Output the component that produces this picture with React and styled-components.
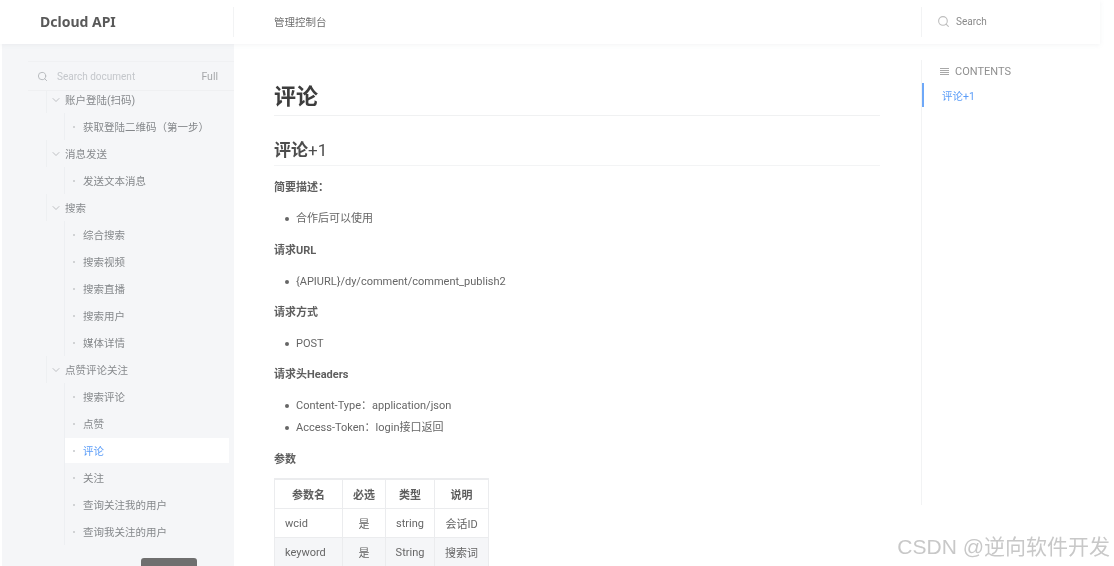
import React from "react";
import styled, { createGlobalStyle } from "styled-components";
import { Search, ChevronDown } from "lucide-react";

const Global = createGlobalStyle`
  html, body { margin: 0; padding: 0; background: #fff; }
  body { font-family: Roboto, "Noto Sans CJK SC", sans-serif; color: #5c5c5c; }
`;

const Page = styled.div`
  position: relative;
  width: 1114px;
  height: 566px;
  overflow: hidden;
  background: #fff;
  display: flex;
  flex-direction: column;
  filter: blur(0.4px);
`;

const Header = styled.header`
  width: 1100px;
  height: 44px;
  flex: none;
  display: flex;
  align-items: center;
  background: #fff;
  box-shadow: 0 1px 5px rgba(120, 130, 140, 0.09);
  position: relative;
  z-index: 2;
`;

const Brand = styled.div`
  width: 234px;
  height: 30px;
  flex: none;
  box-sizing: border-box;
  padding-left: 40px;
  border-right: 1px solid #f2f3f4;
  font-family: "Noto Sans", sans-serif;
  font-size: 14px;
  font-weight: 700;
  line-height: 29px;
  color: #595959;
`;

const HeaderLink = styled.div`
  margin-left: 40px;
  width: 647px;
  padding-bottom: 2px;
  font-size: 10.5px;
  color: #6e6e6e;
`;

const HeaderSearch = styled.div`
  height: 30px;
  flex: 1;
  display: flex;
  align-items: center;
  gap: 6px;
  padding-left: 15px;
  padding-bottom: 1px;
  box-sizing: border-box;
  border-left: 1px solid #f2f3f4;
  font-size: 10px;
  color: #8a8a8a;
  svg { color: #bdbdbd; }
`;

const Body = styled.div`
  flex: 1;
  min-height: 0;
  display: flex;
`;

const Sidebar = styled.aside`
  width: 232px;
  flex: none;
  margin-left: 2px;
  background: #f5f6f8;
  position: relative;
  display: flex;
  flex-direction: column;
  overflow: hidden;
`;

const DocSearch = styled.div`
  height: 28px;
  flex: none;
  margin: 17px 0 0 26px;
  padding: 0 16px 0 9px;
  display: flex;
  align-items: center;
  border-top: 1px solid #f0f1f3;
  border-bottom: 1px solid #eff0f2;
  font-size: 10px;
  color: #c4c7cb;
  svg { color: #b4b7ba; margin-right: 9px; }
`;

const Full = styled.span`
  margin-left: auto;
  font-size: 10.5px;
  color: #a6a8aa;
`;

const TreeClip = styled.div`
  flex: 1;
  min-height: 0;
  overflow: hidden;
`;

const Tree = styled.div`
  margin-top: -5px;
  padding-left: 44px;
  display: flex;
  flex-direction: column;
`;

const GroupRow = styled.div`
  height: 27px;
  display: flex;
  align-items: center;
  gap: 3px;
  padding-left: 3px;
  border-left: 1px solid #eef0f2;
  font-size: 10.5px;
  color: #878a8d;
  svg { color: #a5a8ab; flex: none; }
`;

const LeafList = styled.div`
  margin-left: 18px;
  border-left: 1px solid #edeff2;
  margin-right: 5px;
`;

const Leaf = styled.div`
  height: ${(p) => (p.$active ? "25px" : "27px")};
  margin: ${(p) => (p.$active ? "1px 0" : "0")};
  display: flex;
  align-items: center;
  font-size: 10.5px;
  padding-left: 8px;
  background: ${(p) => (p.$active ? "#fff" : "transparent")};
  color: ${(p) => (p.$active ? "#5a9cf8" : "#85888b")};
  &::before {
    content: "";
    width: 2px;
    height: 2px;
    border-radius: 50%;
    background: #c4c7ca;
    margin-right: 8px;
  }
`;

const ScrollTop = styled.div`
  position: absolute;
  left: 139px;
  bottom: -10px;
  width: 56px;
  height: 18px;
  border-radius: 3px;
  background: #6f6f6f;
`;

const Main = styled.main`
  width: 606px;
  flex: none;
  margin-left: 40px;
  min-width: 0;
  overflow: hidden;
`;

const H1 = styled.h1`
  margin: 34px 0 0;
  height: 38px;
  box-sizing: border-box;
  border-bottom: 1px solid #f0f1f2;
  font-size: 22px;
  line-height: 37px;
  font-weight: 700;
  color: #3d3d3d;
`;

const H2 = styled.h2`
  margin: 19px 0 0;
  height: 31px;
  box-sizing: border-box;
  border-bottom: 1px solid #f3f4f5;
  font-size: 17px;
  line-height: 30px;
  font-weight: 700;
  color: #4d4d4d;
  span { font-weight: 400; }
`;

const Label = styled.p`
  margin: ${(p) => p.$top || 9}px 0 0;
  height: 22px;
  line-height: 22px;
  font-size: 11px;
  font-weight: 700;
  color: #5e5e5e;
`;

const Bullets = styled.ul`
  list-style: none;
  margin: 9px 0 0;
  padding: 0 0 0 22px;
  li {
    position: relative;
    height: 22px;
    line-height: 22px;
    font-size: 11px;
    color: #666;
  }
  li::before {
    content: "";
    position: absolute;
    left: -11px;
    top: 9px;
    width: 4px;
    height: 4px;
    border-radius: 50%;
    background: #666;
  }
`;

const Table = styled.table`
  margin-top: 7px;
  width: 214px;
  table-layout: fixed;
  border-collapse: collapse;
  font-size: 11px;
  color: #666;
  th, td {
    border: 1px solid #ebecee;
    text-align: center;
    padding: 0;
  }
  th { height: 28px; font-weight: 700; color: #5e5e5e; border-top-width: 2px; }
  td { height: 28px; }
  td:first-child { text-align: left; padding-left: 10px; }
  tbody tr:nth-child(2) td { background: #f5f6f8; }
`;

const Toc = styled.aside`
  margin: 16px 0 61px 41px;
  flex: 1;
  border-left: 1px solid #f2f3f4;
`;

const TocTitle = styled.div`
  margin: 2px 0 0 18px;
  height: 18px;
  display: flex;
  align-items: center;
  gap: 6px;
  font-size: 11px;
  color: #8f8f8f;
`;

const TocIcon = styled.svg`
  width: 9px;
  height: 7px;
  flex: none;
`;

const TocLink = styled.div`
  margin-top: 3px;
  height: 24px;
  line-height: 27px;
  padding-left: 18px;
  border-left: 2px solid #6ea8f8;
  font-size: 10.5px;
  color: #5a9cf8;
`;

const Watermark = styled.div`
  position: absolute;
  right: 4px;
  bottom: 5px;
  font-family: "Liberation Sans", "Noto Sans CJK SC", sans-serif;
  font-size: 21px;
  line-height: 28px;
  color: #c8c8c8;
  text-shadow: 1px 1px 1px rgba(255, 255, 255, 0.9);
  white-space: nowrap;
`;

const nav = [
  { title: "账户登陆(扫码)", items: ["获取登陆二维码（第一步）"] },
  { title: "消息发送", items: ["发送文本消息"] },
  { title: "搜索", items: ["综合搜索", "搜索视频", "搜索直播", "搜索用户", "媒体详情"] },
  { title: "点赞评论关注", items: ["搜索评论", "点赞", "评论", "关注", "查询关注我的用户", "查询我关注的用户"] },
];

const params = [
  ["wcid", "是", "string", "会话ID"],
  ["keyword", "是", "String", "搜索词"],
];

export default function App() {
  return (
    <Page>
      <Global />
      <Header>
        <Brand>Dcloud API</Brand>
        <HeaderLink>管理控制台</HeaderLink>
        <HeaderSearch>
          <Search size={13} strokeWidth={2} />
          Search
        </HeaderSearch>
      </Header>
      <Body>
        <Sidebar>
          <DocSearch>
            <Search size={11} strokeWidth={2} />
            Search document
            <Full>Full</Full>
          </DocSearch>
          <TreeClip>
            <Tree>
              {nav.map((group) => (
                <div key={group.title}>
                  <GroupRow>
                    <ChevronDown size={12} strokeWidth={1.4} />
                    {group.title}
                  </GroupRow>
                  <LeafList>
                    {group.items.map((item) => (
                      <Leaf key={item} $active={item === "评论"}>{item}</Leaf>
                    ))}
                  </LeafList>
                </div>
              ))}
            </Tree>
          </TreeClip>
          <ScrollTop />
        </Sidebar>
        <Main>
          <H1>评论</H1>
          <H2>评论<span>+1</span></H2>
          <Label $top={11}>简要描述：</Label>
          <Bullets><li>合作后可以使用</li></Bullets>
          <Label $top={10}>请求URL</Label>
          <Bullets><li>{"{APIURL}"}/dy/comment/comment_publish2</li></Bullets>
          <Label>请求方式</Label>
          <Bullets><li>POST</li></Bullets>
          <Label>请求头Headers</Label>
          <Bullets>
            <li>Content-Type：application/json</li>
            <li>Access-Token：login接口返回</li>
          </Bullets>
          <Label $top={10}>参数</Label>
          <Table>
            <colgroup>
              <col style={{ width: 68 }} />
              <col style={{ width: 43 }} />
              <col style={{ width: 49 }} />
              <col style={{ width: 54 }} />
            </colgroup>
            <thead>
              <tr><th>参数名</th><th>必选</th><th>类型</th><th>说明</th></tr>
            </thead>
            <tbody>
              {params.map((row) => (
                <tr key={row[0]}>
                  {row.map((cell) => <td key={cell}>{cell}</td>)}
                </tr>
              ))}
            </tbody>
          </Table>
        </Main>
        <Toc>
          <TocTitle>
            <TocIcon viewBox="0 0 9 7">
              <path d="M0 .5h9M0 2.5h9M0 4.5h9M0 6.5h9" stroke="#a8a8a8" strokeWidth="1" />
            </TocIcon>
            CONTENTS
          </TocTitle>
          <TocLink>评论+1</TocLink>
        </Toc>
      </Body>
      <Watermark>CSDN @逆向软件开发</Watermark>
    </Page>
  );
}
